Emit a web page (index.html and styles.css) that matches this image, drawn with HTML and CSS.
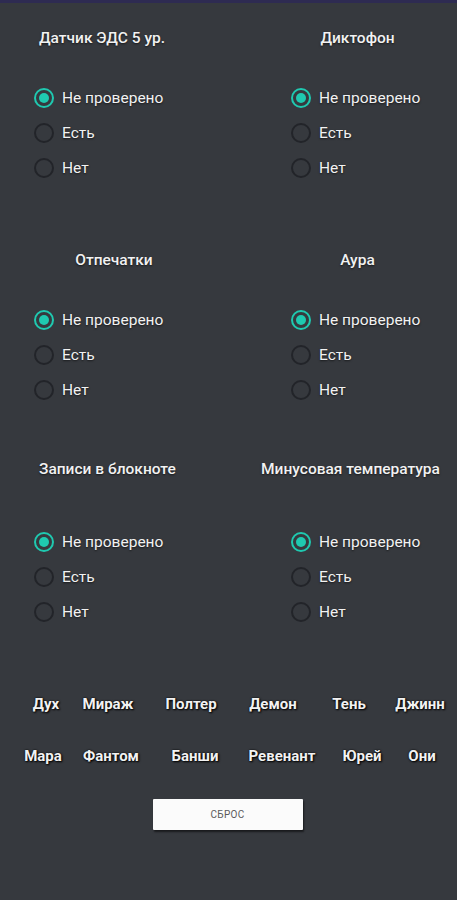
FILE: index.html
```html
<!DOCTYPE html>
<html lang="ru">
<head>
<meta charset="utf-8">
<title>Улики</title>
<link rel="stylesheet" href="styles.css">
</head>
<body>
<div class="topbar"></div>
<main class="page">
  <section class="pair pair--first">
    <div class="col col--left">
      <h2 class="title title--start">Датчик ЭДС 5 ур.</h2>
      <div class="radios">
        <label class="opt"><input type="radio" name="emf" checked><span>Не проверено</span></label>
        <label class="opt"><input type="radio" name="emf"><span>Есть</span></label>
        <label class="opt"><input type="radio" name="emf"><span>Нет</span></label>
      </div>
    </div>
    <div class="col col--right">
      <h2 class="title">Диктофон</h2>
      <div class="radios">
        <label class="opt"><input type="radio" name="box" checked><span>Не проверено</span></label>
        <label class="opt"><input type="radio" name="box"><span>Есть</span></label>
        <label class="opt"><input type="radio" name="box"><span>Нет</span></label>
      </div>
    </div>
  </section>

  <section class="pair pair--second">
    <div class="col col--left">
      <h2 class="title">Отпечатки</h2>
      <div class="radios">
        <label class="opt"><input type="radio" name="prints" checked><span>Не проверено</span></label>
        <label class="opt"><input type="radio" name="prints"><span>Есть</span></label>
        <label class="opt"><input type="radio" name="prints"><span>Нет</span></label>
      </div>
    </div>
    <div class="col col--right">
      <h2 class="title">Аура</h2>
      <div class="radios">
        <label class="opt"><input type="radio" name="orb" checked><span>Не проверено</span></label>
        <label class="opt"><input type="radio" name="orb"><span>Есть</span></label>
        <label class="opt"><input type="radio" name="orb"><span>Нет</span></label>
      </div>
    </div>
  </section>

  <section class="pair pair--third">
    <div class="col col--left">
      <h2 class="title title--start">Записи в блокноте</h2>
      <div class="radios">
        <label class="opt"><input type="radio" name="book" checked><span>Не проверено</span></label>
        <label class="opt"><input type="radio" name="book"><span>Есть</span></label>
        <label class="opt"><input type="radio" name="book"><span>Нет</span></label>
      </div>
    </div>
    <div class="col col--right">
      <h2 class="title title--wide">Минусовая температура</h2>
      <div class="radios">
        <label class="opt"><input type="radio" name="temp" checked><span>Не проверено</span></label>
        <label class="opt"><input type="radio" name="temp"><span>Есть</span></label>
        <label class="opt"><input type="radio" name="temp"><span>Нет</span></label>
      </div>
    </div>
  </section>

  <section class="ghosts">
    <div class="ghost-row ghost-row--a">
      <span>Дух</span><span>Мираж</span><span>Полтер</span><span>Демон</span><span>Тень</span><span>Джинн</span>
    </div>
    <div class="ghost-row ghost-row--b">
      <span>Мара</span><span>Фантом</span><span>Банши</span><span>Ревенант</span><span>Юрей</span><span>Они</span>
    </div>
  </section>

  <div class="actions">
    <button class="reset" type="button">СБРОС</button>
  </div>
</main>
</body>
</html>
```
FILE: styles.css
```css
* { box-sizing: border-box; }

html, body {
  margin: 0;
  padding: 0;
  background: #36393e;
}

body {
  font-family: Roboto, "Noto Sans", "Liberation Sans", sans-serif;
  color: #f2f2f2;
  width: 457px;
  height: 900px;
  overflow: hidden;
}

.topbar {
  height: 3px;
  background: #2e2b52;
}

.page {
  display: flex;
  flex-direction: column;
}

.pair {
  display: grid;
  grid-template-columns: 250px 207px;
}

.pair--first { margin-top: 25px; }
.pair--second { margin-top: 65px; }
.pair--third { margin-top: 52px; }

.col--left { padding-left: 33px; }
.col--right { padding-left: 40px; }

.title {
  margin: 0;
  font-size: 15.5px;
  font-weight: 500;
  line-height: 20px;
  height: 20px;
  white-space: nowrap;
  text-shadow: 0 1px 2px rgba(0,0,0,0.6);
  text-align: center;
}

.col--left .title { width: 162px; }
.col--left .title--start { text-align: left; padding-left: 6px; }
.col--right .title { margin-left: -36px; width: 207px; }
.col--right .title--wide { margin-left: -43px; }

.radios {
  display: flex;
  flex-direction: column;
  margin-top: 32px;
}

.pair--third .radios { margin-top: 45px; }

.opt {
  display: flex;
  align-items: center;
  gap: 8px;
  height: 35px;
  font-size: 15.5px;
  text-shadow: 0 1px 2px rgba(0,0,0,0.6);
}

.opt input {
  appearance: none;
  -webkit-appearance: none;
  margin: 0 0 0 1px;
  width: 20px;
  height: 20px;
  border-radius: 50%;
  border: 2px solid #222429;
  position: relative;
  flex: none;
}

.opt input:checked {
  border-color: #1fc9b0;
}

.opt input:checked::after {
  content: "";
  position: absolute;
  left: 3px;
  top: 3px;
  width: 10px;
  height: 10px;
  border-radius: 50%;
  background: #1fc9b0;
}

.ghosts {
  display: flex;
  flex-direction: column;
  gap: 32px;
  margin-top: 65px;
}

.ghost-row {
  display: grid;
  justify-items: center;
  font-size: 15px;
  font-weight: 700;
  line-height: 20px;
  text-shadow: 1px 1px 2px #000, 0 0 2px #000;
}

.ghost-row--a {
  grid-template-columns: 62px 62px 104px 60px 92px 50px;
  padding-left: 15px;
}

.ghost-row--b {
  grid-template-columns: 66px 70px 98px 76px 84px 36px;
  padding-left: 10px;
}

.ghost-row span { white-space: nowrap; }

.actions {
  display: flex;
  justify-content: center;
  margin-top: 33px;
  padding-right: 2px;
}

.reset {
  width: 150px;
  height: 31px;
  background: #fbfbfb;
  border: 0;
  border-radius: 1px;
  box-shadow: 1px 2px 2px rgba(0,0,0,0.55);
  font-family: Roboto, "Liberation Sans", sans-serif;
  font-size: 10px;
  color: #5a5a5a;
  letter-spacing: 0.3px;
  padding: 0;
}
```
